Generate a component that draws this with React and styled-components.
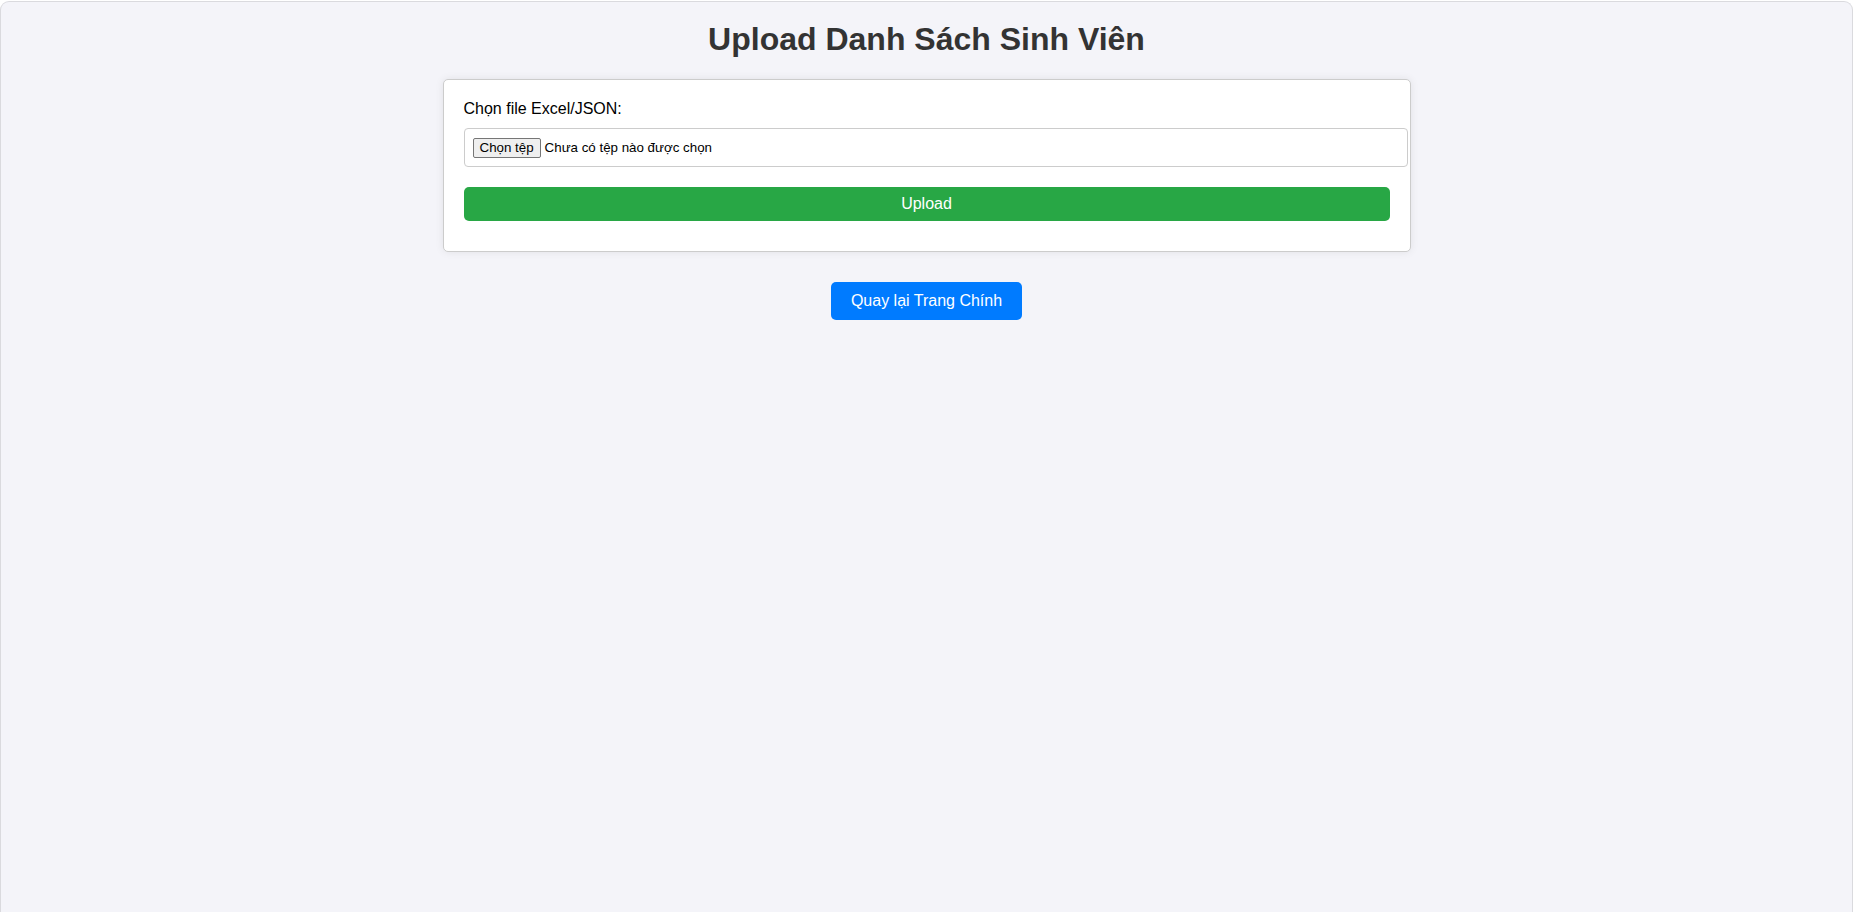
import React, {useState} from "react";
import styled, {createGlobalStyle} from "styled-components";

const GlobalStyle = createGlobalStyle`
  html, body {
    margin: 0;
    padding: 0;
    background: #ffffff;
  }
  body {
    font-family: "Liberation Sans", Arial, sans-serif;
  }
`
const Pagina = styled.div`
  min-height: 100vh;
  box-sizing: border-box;
  background-color: #f4f4f9;
  border: 1px solid #dadade;
  border-bottom: none;
  border-radius: 9px 9px 0 0;
  margin-top: 1px;
  display: flex;
  flex-direction: column;
  align-items: center;
`
const Titulo = styled.h1`
  margin: 19px 0 21px;
  font-size: 32px;
  font-weight: 700;
  color: #333;
  text-align: center;
`
const Tarjeta = styled.form`
  width: 968px;
  box-sizing: border-box;
  background-color: #fff;
  border: 1px solid #ccc;
  border-radius: 5px;
  box-shadow: 0 0 8px rgba(0, 0, 0, 0.08);
  padding: 20px 20px 30px;
  display: flex;
  flex-direction: column;
`
const Etiqueta = styled.label`
  display: block;
  font-size: 16px;
  color: #000;
  line-height: 18px;
  margin-bottom: 10px;
`
const CampoArchivo = styled.label`
  display: flex;
  align-items: center;
  width: 100%;
  box-sizing: content-box;
  height: 21px;
  padding: 8px;
  border: 1px solid #ccc;
  border-radius: 4px;
  background: #fff;
  font-size: 13.33px;
  color: #000;
  cursor: pointer;

  input {
    display: none;
  }
`
const BotonArchivo = styled.span`
  display: inline-flex;
  align-items: center;
  height: 20px;
  box-sizing: border-box;
  padding: 0 6px;
  margin-right: 4px;
  background-color: #efefef;
  border: 1px solid #767676;
  border-radius: 2px;
  font-size: 13.33px;
  color: #000;
`
const Boton = styled.button`
  font-family: "Liberation Sans", Arial, sans-serif;
  font-size: 16px;
  line-height: 18px;
  color: #fff;
  border: none;
  border-radius: 5px;
  cursor: pointer;
  background-color: ${props => props.$color};
  padding: ${props => props.$ancho ? "8px" : "10px 20px"};
  width: ${props => props.$ancho ? "100%" : "auto"};
  margin-top: ${props => props.$margen};
`

const App = () => {
    const [archivo, cambiarArchivo] = useState(null)

    return (
        <>
            <GlobalStyle />
            <Pagina>
                <Titulo>Upload Danh Sách Sinh Viên</Titulo>

                <Tarjeta onSubmit={(e) => e.preventDefault()}>
                    <Etiqueta htmlFor="archivo">Chọn file Excel/JSON:</Etiqueta>
                    <CampoArchivo>
                        <input
                            id="archivo"
                            type="file"
                            accept=".xlsx,.xls,.json"
                            onChange={(e) => cambiarArchivo(e.target.files[0] || null)}
                        />
                        <BotonArchivo>Chọn tệp</BotonArchivo>
                        {archivo ? archivo.name : "Chưa có tệp nào được chọn"}
                    </CampoArchivo>
                    <Boton type="submit" $color="#28a745" $ancho $margen="20px">Upload</Boton>
                </Tarjeta>

                <Boton type="button" $color="#007bff" $margen="30px">Quay lại Trang Chính</Boton>
            </Pagina>
        </>
    );
}

export default App;
